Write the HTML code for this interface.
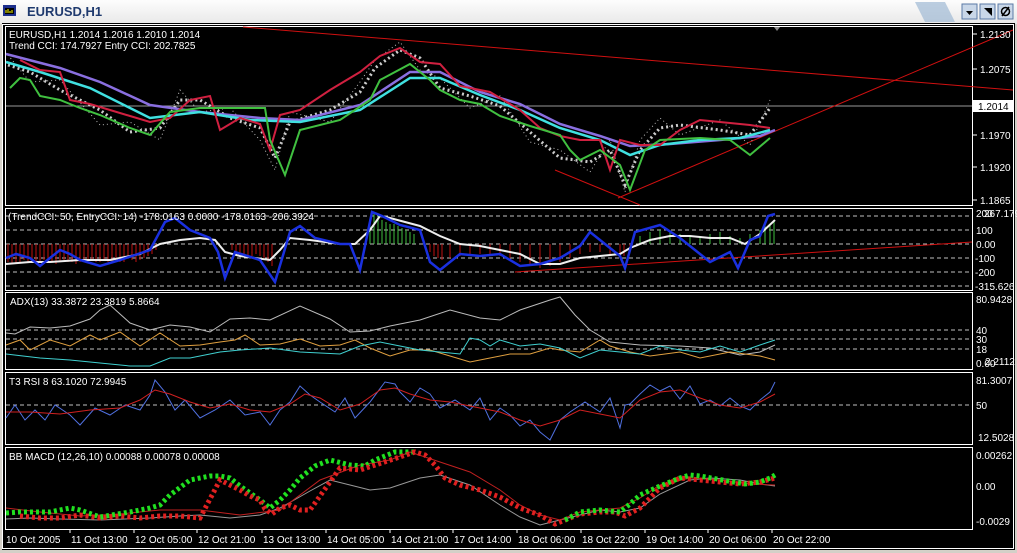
<!DOCTYPE html>
<html><head><meta charset="utf-8"><style>
body{margin:0;width:1017px;height:553px;overflow:hidden;background:#d4d0c8;font-family:"Liberation Sans",sans-serif}
.t{position:absolute;left:0;top:0;width:1017px;height:24px;background:linear-gradient(#fdfdfd,#e8e8e8)}
svg{position:absolute;left:0;top:0}
text{font-family:"Liberation Sans",sans-serif;font-size:10px;fill:#fff}
</style></head><body>
<div class="t"></div>
<svg width="1017" height="553" viewBox="0 0 1017 553">
<rect x="3" y="5" width="13" height="11" fill="#1c2e8c"/><rect x="5" y="8" width="9" height="6" fill="#000"/>
<path d="M6 13v-3M8 13v-4M10 13v-2M12 13v-3" stroke="#ff0" stroke-width="1"/>
<text x="27" y="16" style="font-size:13px;font-weight:bold;fill:#1f3a6e">EURUSD,H1</text>
<path d="M915 2l30 0 10 20-30 0z" fill="#9fb9d4" opacity=".7"/>
<rect x="962" y="4" width="15" height="15" fill="#c9d7e8" stroke="#5a7aa6"/><path d="M966 11h7l-3.5 4z" fill="#000"/>
<rect x="980" y="4" width="15" height="15" fill="#c9d7e8" stroke="#5a7aa6"/><path d="M984 8h8v8z" fill="#000"/>
<rect x="998" y="4" width="15" height="15" fill="#c9d7e8" stroke="#5a7aa6"/><circle cx="1005.5" cy="11.5" r="4" fill="none" stroke="#000" stroke-width="1.5"/><path d="M1002 16l7-9" stroke="#000" stroke-width="1.5"/>
<rect x="2" y="23" width="1013" height="527" fill="#000"/>
<rect x="2.5" y="24.5" width="1011" height="524" fill="none" stroke="#fff"/>
<g fill="none" stroke="#fff">
<rect x="5.5" y="26.5" width="967" height="179"/>
<rect x="5.5" y="208.5" width="967" height="82"/>
<rect x="5.5" y="292.5" width="967" height="77"/>
<rect x="5.5" y="372.5" width="967" height="72"/>
<rect x="5.5" y="447.5" width="967" height="82"/>
</g>
<g stroke="#fff" stroke-dasharray="4,3" stroke-width=".8">
<path d="M6 216H972M6 230H972M6 244H972M6 258H972M6 272H972M6 286H972"/>
<path d="M6 330H972M6 339H972M6 349H972"/>
<path d="M6 405H972"/>
</g>
<path d="M6 106H972" stroke="#999"/>
<path d="M243 27L1013 90" stroke="#d01010"/>
<path d="M618 198L1013 30" stroke="#d01010"/>
<path d="M555 170L640 205" stroke="#d01010"/>
<path d="M515 272L972 242" stroke="#d01010"/>
<polyline fill="none" stroke="#ccc" stroke-width="3" stroke-dasharray="2,3" points="8,65 30,72 60,90 100,110 130,132 160,128 180,100 200,100 230,118 260,128 275,158 290,122 330,110 360,92 375,68 400,50 420,58 440,88 470,96 500,106 530,132 560,158 590,162 610,150 625,185 640,150 660,128 680,125 720,130 750,135 770,108"/>
<polyline fill="none" stroke="#bbb" stroke-width="1" stroke-dasharray="1,3" points="8,55 30,82 60,80 100,125 130,122 160,140 180,90 200,112 230,108 260,140 275,170 290,112 330,122 360,82 375,60 400,42 420,70 440,78 470,108 500,96 530,142 560,150 590,172 610,140 625,192 640,140 660,118 680,135 720,120 750,145 770,100"/>
<polyline fill="none" stroke="#8a6fe0" stroke-width="2.5" points="6,54 60,68 100,82 150,105 200,112 260,118 300,120 360,105 410,72 440,72 480,92 520,104 560,124 600,136 630,146 670,144 720,140 760,136 775,130"/>
<polyline fill="none" stroke="#40e0e0" stroke-width="2.5" points="6,62 40,72 90,88 150,118 200,112 250,120 300,122 360,110 410,78 440,78 480,95 520,110 560,128 600,140 630,155 660,145 700,140 740,138 770,130"/>
<polyline fill="none" stroke="#d02040" stroke-width="2" points="20,60 40,70 60,72 70,100 90,104 110,110 130,116 150,122 170,118 190,100 210,96 220,130 240,118 260,124 270,150 280,115 300,110 330,90 360,72 380,56 400,48 420,62 440,64 460,86 490,92 520,110 540,128 560,136 580,140 600,140 610,170 620,140 640,145 660,145 680,130 700,120 730,123 750,125 770,128"/>
<polyline fill="none" stroke="#40c040" stroke-width="2" points="10,88 20,78 30,80 40,96 60,100 80,108 100,115 130,128 150,135 170,112 200,108 240,108 265,108 270,140 285,175 300,130 340,120 370,100 380,80 410,64 430,80 440,90 460,100 480,104 500,116 530,126 560,135 570,150 580,160 600,150 620,165 630,190 645,150 660,140 700,138 730,140 750,155 770,138"/>
<g stroke="#c01010" stroke-width="1">
<path d="M8 244V262M12 244V264M16 244V264M20 244V262M24 244V260M28 244V262M32 244V262M36 244V264M40 244V262M44 244V260M48 244V262M52 244V262M56 244V264M60 244V262M64 244V260M68 244V262M72 244V262M76 244V264M80 244V262M84 244V262M88 244V260M92 244V260M96 244V262M100 244V262M104 244V260M108 244V262M112 244V262M116 244V260M120 244V262M124 244V262M128 244V258M132 244V260M136 244V262M140 244V260M144 244V258M148 244V256M152 244V254M156 244V250"/>
<path d="M232 244V250M236 244V252M240 244V254M244 244V256M248 244V256M252 244V256M256 244V254M260 244V256M264 244V258M268 244V262M272 244V266"/>
<path d="M430 244V252M434 244V256M438 244V258M442 244V260M450 244V258M460 244V256M470 244V254M480 244V254M490 244V254M500 244V256M510 244V258M520 244V262M530 244V266M540 244V268M550 244V266M560 244V262M570 244V258M580 244V254M590 244V252M600 244V252M610 244V254M620 244V258M624 244V256M630 244V250"/>
</g>
<g stroke="#40c040" stroke-width="1">
<path d="M370 244V218M374 244V214M378 244V214M382 244V220M386 244V222M390 244V224M394 244V224M398 244V226M402 244V228M406 244V230M410 244V232M414 244V234"/>
<path d="M640 244V236M650 244V232M660 244V230M670 244V232M680 244V234M690 244V236M700 244V236M710 244V234M720 244V232M730 244V236M740 244V238M750 244V234M760 244V230M765 244V226M770 244V224M774 244V220"/>
</g>
<polyline fill="none" stroke="#eee" stroke-width="2" points="6,264 30,262 50,262 80,260 110,260 140,254 160,244 180,240 200,238 215,240 225,252 240,256 270,260 280,250 290,238 310,240 340,244 355,244 370,230 380,216 390,218 420,226 440,236 460,244 480,246 500,250 520,254 540,264 560,264 580,258 600,256 620,254 630,248 650,240 670,236 690,236 710,238 730,238 745,244 760,234 775,220"/>
<polyline fill="none" stroke="#1a30e0" stroke-width="2.5" points="6,258 16,254 30,258 40,266 60,250 70,254 80,260 100,266 120,260 150,250 165,222 175,218 190,230 210,238 218,252 225,278 235,252 260,260 275,282 290,232 300,226 315,238 340,244 350,244 360,270 372,212 382,216 400,225 420,230 430,262 440,270 460,254 480,256 500,254 520,266 540,264 560,258 580,246 590,232 600,240 620,256 625,268 635,232 660,225 680,238 700,254 710,262 730,252 738,268 750,240 760,236 768,216 775,214"/>
<polyline fill="none" stroke="#bbb" points="6,333 15,334 30,327 50,328 70,326 90,319 100,310 110,305 130,323 150,330 170,325 190,327 210,332 230,319 250,318 270,320 300,306 330,319 350,332 370,331 390,326 420,320 450,310 480,318 500,320 520,310 550,300 560,297 575,315 590,330 610,342 640,345 680,346 710,348 740,355 760,352 775,345"/>
<polyline fill="none" stroke="#e0a040" points="6,345 20,340 30,350 50,340 70,346 90,335 100,340 120,332 140,346 160,333 180,346 200,345 220,342 235,340 245,335 260,345 280,344 300,339 320,346 340,345 355,340 370,348 390,356 410,350 430,350 450,356 470,362 490,358 510,354 530,354 550,348 560,350 580,352 600,340 610,346 630,352 650,356 680,352 700,358 730,352 760,356 775,360"/>
<polyline fill="none" stroke="#40d0d0" points="6,354 40,358 70,360 100,363 130,366 150,366 170,358 190,358 220,352 240,350 270,348 300,352 340,354 360,346 380,342 400,346 420,350 440,352 460,354 470,338 480,340 490,346 500,340 520,346 540,344 560,348 580,358 600,350 620,352 640,354 660,346 680,350 700,352 720,346 740,352 760,345 775,340"/>
<polyline fill="none" stroke="#5070e0" points="6,418 15,405 25,420 35,410 45,420 55,405 70,415 80,425 95,408 110,415 125,405 140,410 150,395 155,380 165,392 175,410 185,400 200,418 215,410 230,400 245,415 260,412 270,425 280,410 290,402 300,386 310,395 320,402 335,412 345,398 355,418 370,402 385,382 395,384 400,392 410,402 420,388 430,394 440,408 455,400 470,410 480,398 490,420 500,408 510,415 520,426 530,420 540,432 550,440 560,420 570,412 585,402 600,412 610,398 620,428 625,405 630,404 640,394 650,385 660,391 670,386 680,399 690,386 700,404 710,400 720,406 730,398 740,406 750,410 760,400 770,392 775,382"/>
<polyline fill="none" stroke="#d02020" points="6,412 30,412 60,414 90,410 120,408 140,400 155,390 170,394 190,402 210,408 230,404 250,410 270,412 290,404 305,394 320,398 340,410 360,404 380,390 395,388 410,394 430,400 450,402 480,408 500,412 520,420 540,426 560,420 580,410 600,414 620,418 640,400 660,392 680,390 700,398 720,405 740,408 760,402 775,394"/>
<polyline fill="none" stroke="#999" points="6,519 30,518 60,519 100,520 150,518 180,516 200,515 230,518 260,515 280,508 310,491 330,480 350,485 370,490 390,488 420,478 440,475 470,485 500,505 520,517 540,525 560,520 580,515 600,510 620,512 640,508 660,494 690,480 710,478 740,480 760,484 775,486"/>
<polyline fill="none" stroke="#c02020" points="6,508 40,512 80,516 120,514 160,510 200,510 240,515 280,510 320,480 360,465 390,460 410,452 440,462 470,472 500,490 520,505 540,515 560,520 580,512 600,510 620,508 640,498 660,485 690,478 720,480 750,484 775,485"/>
<polyline fill="none" stroke="#20e020" stroke-width="5" stroke-dasharray="3,3" points="6,513 20,512 50,512 70,508 80,510 100,517 130,512 150,508 160,505 170,495 190,480 210,476 220,476 230,478 240,486 260,500 270,508 280,500 290,490 300,478 315,466 330,460 350,465 365,466 375,460 385,456 395,452 405,452 415,452"/>
<polyline fill="none" stroke="#e02020" stroke-width="5" stroke-dasharray="3,3" points="20,516 40,518 60,518 80,515 100,518 120,516 140,518 160,516 180,516 200,518 220,480 240,490 250,496 260,500 265,509 272,514 280,508 290,505 300,510 310,510 340,468 360,470 415,452 425,455 435,465 445,478 460,485 480,490 500,497 520,508 540,515 555,524 565,520 580,514 600,512 615,512 625,516 640,508 660,488 680,478 700,480 720,482 740,484 760,482 775,478"/>
<polyline fill="none" stroke="#20e020" stroke-width="5" stroke-dasharray="3,3" points="565,520 580,512 600,510 620,512 630,504 640,495 660,486 680,478 690,475 700,476 745,484 760,482 770,478 775,475"/>
<text x="9" y="38">EURUSD,H1  1.2014 1.2016 1.2010 1.2014</text>
<text x="9" y="49">Trend CCI: 174.7927 Entry CCI: 202.7825</text>
<text x="8" y="220">(TrendCCI: 50, EntryCCI: 14) -178.0163 0.0000 -178.0163 -206.3924</text>
<text x="10" y="305">ADX(13) 33.3872 23.3819 5.8664</text>
<text x="9" y="385">T3 RSI 8 63.1020 72.9945</text>
<text x="9" y="460">BB MACD (12,26,10) 0.00088 0.00078 0.00008</text>
<g stroke="#fff"><path d="M973 34h4M973 69h4M973 135h4M973 167h4M973 200h4"/></g>
<text x="980" y="38">1.2130</text><text x="980" y="73">1.2075</text>
<rect x="973" y="100" width="40" height="12" fill="#fff"/><text x="978" y="110" style="fill:#000">1.2014</text>
<text x="980" y="139">1.1970</text><text x="980" y="171">1.1920</text><text x="980" y="204">1.1865</text>
<text x="976" y="217">200</text><text x="984" y="217">267.1795</text>
<text x="976" y="234">100</text><text x="976" y="248">0.00</text><text x="975" y="262">-100</text><text x="975" y="276">-200</text><text x="975" y="290">-315.626</text>
<text x="976" y="303">80.9428</text><text x="976" y="334">40</text><text x="976" y="343">30</text><text x="976" y="353">18</text><text x="976" y="367">0.00</text><text x="985" y="365">2.2112</text>
<text x="976" y="384">81.3007</text><text x="976" y="409">50</text><text x="978" y="441">12.5028</text>
<text x="976" y="459">0.00262</text><text x="976" y="490">0.00</text><text x="976" y="525">-0.0029</text>
<g stroke="#fff"><path d="M70 529v4M134 529v4M197 529v4M262 529v4M326 529v4M390 529v4M453 529v4M517 529v4M581 529v4M645 529v4M708 529v4M772 529v4"/></g>
<text x="6" y="543">10 Oct 2005</text><text x="71" y="543">11 Oct 13:00</text><text x="135" y="543">12 Oct 05:00</text><text x="198" y="543">12 Oct 21:00</text><text x="263" y="543">13 Oct 13:00</text><text x="327" y="543">14 Oct 05:00</text><text x="391" y="543">14 Oct 21:00</text><text x="454" y="543">17 Oct 14:00</text><text x="518" y="543">18 Oct 06:00</text><text x="582" y="543">18 Oct 22:00</text><text x="646" y="543">19 Oct 14:00</text><text x="709" y="543">20 Oct 06:00</text><text x="773" y="543">20 Oct 22:00</text>
<path d="M774 27l6 0-3 4z" fill="#888"/>
</svg>
</body></html>
